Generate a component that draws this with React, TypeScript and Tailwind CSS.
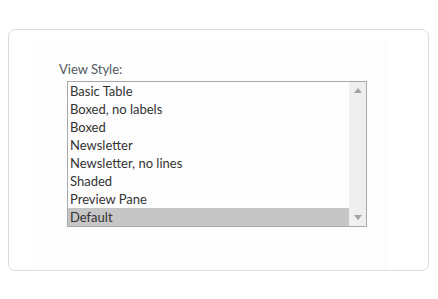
import React from "react";

const items = [
  "Basic Table",
  "Boxed, no labels",
  "Boxed",
  "Newsletter",
  "Newsletter, no lines",
  "Shaded",
  "Preview Pane",
  "Default",
];

export default function App() {
  return (
    <div className="w-[438px] h-[299px] bg-white pt-[29px] pl-[8px]" style={{ fontFamily: 'Lato, "Noto Sans", sans-serif' }}>
      <div className="w-[421px] h-[242px] border border-[#dcdcdc] rounded-[7px] pt-[9px] pl-[23px] overflow-hidden">
        <div className="w-[357px] h-[231px] bg-[#fdfdfd] pt-[22px] pl-[27px]">
          <div className="text-[13px] leading-[16px] text-[#525a63] mb-[4px]">View Style:</div>
          <div className="ml-[8px] w-[300px] h-[146px] border border-[#a8a8a8] flex">
            <div className="flex-1 flex flex-col">
              {items.map((it, i) => (
                <div
                  key={it}
                  className={
                    i === items.length - 1
                      ? "h-[18px] leading-[18px] pl-[2px] text-[13px] text-[#333] bg-[#c6c6c6]"
                      : "h-[18px] leading-[18px] pl-[2px] text-[13px] text-[#333]"
                  }
                >
                  {it}
                </div>
              ))}
            </div>
            <div className="w-[17px] bg-[#efefef] flex flex-col justify-between items-center py-[6px]">
              <svg width="8" height="5" viewBox="0 0 8 5"><path d="M4 0L8 5H0Z" fill="#a3a3a3" /></svg>
              <svg width="8" height="5" viewBox="0 0 8 5"><path d="M0 0H8L4 5Z" fill="#a3a3a3" /></svg>
            </div>
          </div>
        </div>
      </div>
    </div>
  );
}
